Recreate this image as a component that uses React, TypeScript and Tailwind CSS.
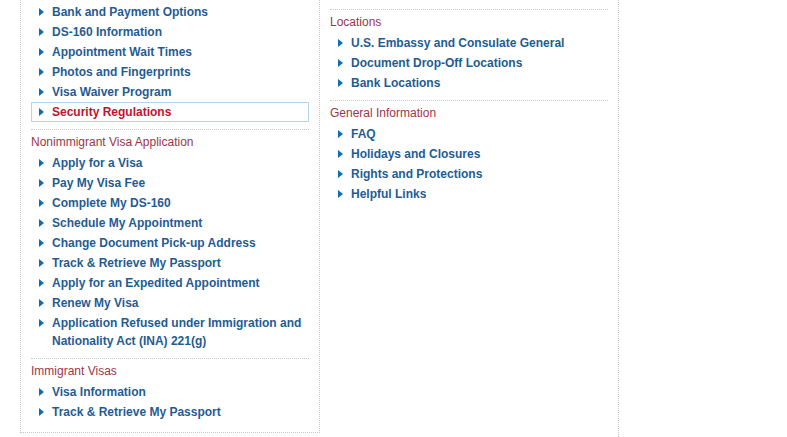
import React from "react";

type Item = { label: string; active?: boolean };

const Arrow = () => (
  <svg width="5" height="8" viewBox="0 0 5 8" className="shrink-0 mt-[5px]">
    <path d="M0 0 L5 4 L0 8 Z" fill="#0b6fb8" />
  </svg>
);

const LinkItem = ({ item }: { item: Item }) => (
  <div
    className={`flex gap-[8px] pl-[7px] border leading-[18px] ${
      item.active ? "border-[#b5d3ee]" : "border-transparent"
    }`}
  >
    <Arrow />
    <span
      className={`font-bold text-[12px] ${
        item.active ? "text-[#c8102e]" : "text-[#1f5c93]"
      }`}
    >
      {item.label}
    </span>
  </div>
);

const Section = ({
  title,
  items,
  last,
}: {
  title: string;
  items: Item[];
  last?: boolean;
}) => (
  <div className={`border-t border-dotted border-[#c8c8c8] pt-[4px] ${last ? "" : "pb-[7px]"}`}>
    <div className="text-[12px] leading-[16px] text-[#9e3548] mb-[3px]">{title}</div>
    {items.map((it) => (
      <LinkItem key={it.label} item={it} />
    ))}
  </div>
);

export default function App() {
  return (
    <div
      className="w-[787px] h-[437px] overflow-hidden bg-white flex items-start"
      style={{ fontFamily: '"Liberation Sans", Arial, sans-serif' }}
    >
      <div className="ml-[20px] w-[300px] border-l border-r border-b border-dotted border-[#c8c8c8] px-[10px] pt-[2px] pb-[10px]">
        <div className="pb-[7px]">
          {[
            "Bank and Payment Options",
            "DS-160 Information",
            "Appointment Wait Times",
            "Photos and Fingerprints",
            "Visa Waiver Program",
          ].map((l) => (
            <LinkItem key={l} item={{ label: l }} />
          ))}
          <LinkItem item={{ label: "Security Regulations", active: true }} />
        </div>
        <Section
          title="Nonimmigrant Visa Application"
          items={[
            { label: "Apply for a Visa" },
            { label: "Pay My Visa Fee" },
            { label: "Complete My DS-160" },
            { label: "Schedule My Appointment" },
            { label: "Change Document Pick-up Address" },
            { label: "Track & Retrieve My Passport" },
            { label: "Apply for an Expedited Appointment" },
            { label: "Renew My Visa" },
            {
              label:
                "Application Refused under Immigration and Nationality Act (INA) 221(g)",
            },
          ]}
        />
        <Section
          title="Immigrant Visas"
          last
          items={[
            { label: "Visa Information" },
            { label: "Track & Retrieve My Passport" },
          ]}
        />
      </div>
      <div className="w-[299px] h-[437px] border-r border-dotted border-[#c8c8c8] px-[10px] pt-[9px]">
        <Section
          title="Locations"
          items={[
            { label: "U.S. Embassy and Consulate General" },
            { label: "Document Drop-Off Locations" },
            { label: "Bank Locations" },
          ]}
        />
        <Section
          title="General Information"
          last
          items={[
            { label: "FAQ" },
            { label: "Holidays and Closures" },
            { label: "Rights and Protections" },
            { label: "Helpful Links" },
          ]}
        />
      </div>
    </div>
  );
}
